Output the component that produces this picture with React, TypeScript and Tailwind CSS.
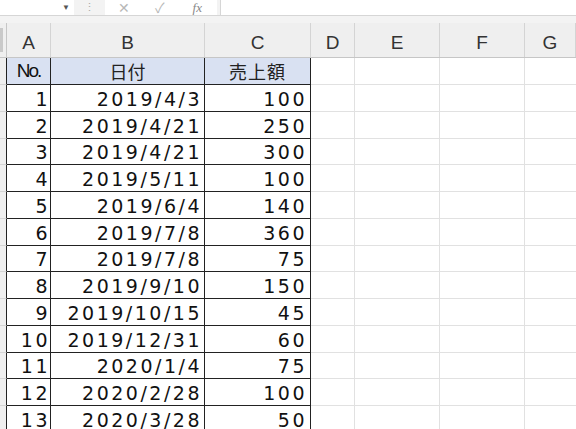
import React from 'react';

// 売上データ
const rows: [number, string, number][] = [
  [1, '2019/4/3', 100],
  [2, '2019/4/21', 250],
  [3, '2019/4/21', 300],
  [4, '2019/5/11', 100],
  [5, '2019/6/4', 140],
  [6, '2019/7/8', 360],
  [7, '2019/7/8', 75],
  [8, '2019/9/10', 150],
  [9, '2019/10/15', 45],
  [10, '2019/12/31', 60],
  [11, '2020/1/4', 75],
  [12, '2020/2/28', 100],
  [13, '2020/3/28', 50],
  [14, '2020/4/2', 120],
];

const letters = ['A', 'B', 'C', 'D', 'E', 'F', 'G'];

function FormulaBar() {
  return (
    <div className="flex h-[23px] flex-col bg-[#f3f3f3]">
      <div className="flex h-[16px] border-b border-[#d6d6d6]">
        <div className="flex w-[74px] items-center justify-end bg-white pr-[4px]">
          <span className="text-[8px] leading-none text-[#555]">▼</span>
        </div>
        <div className="flex w-[31px] items-center justify-center">
          <span className="text-[11px] leading-none text-[#aaa]">⋮</span>
        </div>
        <div className="flex w-[112px] items-center bg-white text-[#b8b8b8]">
          <span className="ml-[13px] text-[14px] leading-none">✕</span>
          <span className="ml-[25px] text-[14px] leading-none">✓</span>
          <span className="ml-[28px] font-['Liberation_Serif',serif] text-[13px] italic leading-none text-[#888]">fx</span>
        </div>
        <div className="w-[3px]" />
        <div className="flex-1 border-l border-[#d6d6d6] bg-white" />
      </div>
    </div>
  );
}

function HeaderRow() {
  return (
    <div className="flex h-[35px] border-b border-[#c6c6c6] bg-[#efefef]">
      <div className="flex w-[7px] items-stretch border-r border-[#c6c6c6] py-[5px]">
        <div className="w-[3px] bg-[#c9c9c9]" />
      </div>
      {letters.map((l, i) => (
        <div
          key={l}
          className={
            'flex items-center justify-center border-r border-[#d4d4d4] pt-[6px] text-[19px] text-[#333] ' +
            (i === 0 ? 'w-[44px]' : i === 1 ? 'w-[154px]' : i === 2 ? 'w-[106px]' : i === 3 ? 'w-[44px]' : i === 6 ? 'flex-1' : 'w-[85px]')
          }
        >
          {l}
        </div>
      ))}
    </div>
  );
}

function EmptyCells() {
  return (
    <>
      <div className="w-[44px] border-r border-b border-[#e1e1e1]" />
      <div className="w-[85px] border-r border-b border-[#e1e1e1]" />
      <div className="w-[85px] border-r border-b border-[#e1e1e1]" />
      <div className="flex-1 border-b border-[#e1e1e1]" />
    </>
  );
}

export default function App() {
  return (
    <div className="h-screen w-full overflow-hidden bg-white font-['Liberation_Sans','Noto_Sans_CJK_JP',sans-serif]">
      <FormulaBar />
      <HeaderRow />

      {/* 見出し行 */}
      <div className="flex h-[27px]">
        <div className="w-[7px] border-r border-b border-r-[#222] border-b-[#d4d4d4] bg-[#efefef]" />
        <div className="flex w-[44px] items-center justify-center border-r border-b border-[#222] bg-[#d9e1f2] pt-[1px] text-[19px] tracking-[-2px] text-[#111]">
          No.
        </div>
        <div className="flex w-[154px] items-center justify-center border-r border-b border-[#222] bg-[#d9e1f2] pt-[1px] font-['Noto_Sans_CJK_JP',sans-serif] text-[18px] text-[#222]">
          日付
        </div>
        <div className="flex w-[106px] items-center justify-center border-r border-b border-[#222] bg-[#d9e1f2] pt-[1px] font-['Noto_Sans_CJK_JP',sans-serif] text-[18px] tracking-[1px] text-[#222]">
          売上額
        </div>
        <EmptyCells />
      </div>

      {rows.map(([no, date, amount]) => (
        <div key={no} className="flex h-[26.75px] font-['DejaVu_Sans',sans-serif]">
          <div className="w-[7px] border-r border-b border-r-[#222] border-b-[#d4d4d4] bg-[#efefef]" />
          <div className="flex w-[44px] items-end justify-end border-r border-b border-[#222] pr-0 pb-[2px] text-[19px] leading-[19px] tracking-[2.5px] text-[#111]">
            {no}
          </div>
          <div className="flex w-[154px] items-end justify-end border-r border-b border-[#222] pr-[2px] pb-[2px] text-[19px] leading-[19px] tracking-[2.5px] text-[#111]">
            {date}
          </div>
          <div className="flex w-[106px] items-end justify-end border-r border-b border-[#222] pr-[3px] pb-[2px] text-[19px] leading-[19px] tracking-[2.5px] text-[#111]">
            {amount}
          </div>
          <EmptyCells />
        </div>
      ))}
    </div>
  );
}
